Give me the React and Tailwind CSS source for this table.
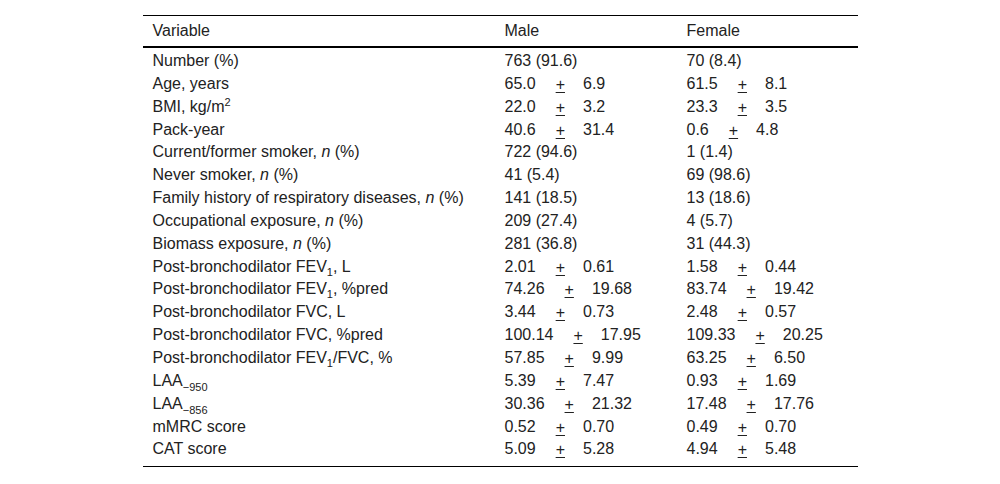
import React from "react";

const MS = ({ m, sd }) => (
  <span className="whitespace-nowrap">
    <span>{m}</span>
    <span className="relative top-[1px] ml-[20px] underline decoration-1 underline-offset-[2px]">+</span>
    <span className="ml-[18px]">{sd}</span>
  </span>
);

const N = () => <i>n</i>;
const S1 = () => <sub className="text-[11px] bottom-[-4px]">1</sub>;

const rows = [
  [<>Number (%)</>, "763 (91.6)", "70 (8.4)"],
  [<>Age, years</>, <MS m="65.0" sd="6.9" />, <MS m="61.5" sd="8.1" />],
  [<>BMI, kg/m<sup className="text-[11px] top-[-6px]">2</sup></>, <MS m="22.0" sd="3.2" />, <MS m="23.3" sd="3.5" />],
  [<>Pack-year</>, <MS m="40.6" sd="31.4" />, <MS m="0.6" sd="4.8" />],
  [<>Current/former smoker, <N /> (%)</>, "722 (94.6)", "1 (1.4)"],
  [<>Never smoker, <N /> (%)</>, "41 (5.4)", "69 (98.6)"],
  [<>Family history of respiratory diseases, <N /> (%)</>, "141 (18.5)", "13 (18.6)"],
  [<>Occupational exposure, <N /> (%)</>, "209 (27.4)", "4 (5.7)"],
  [<>Biomass exposure, <N /> (%)</>, "281 (36.8)", "31 (44.3)"],
  [<>Post-bronchodilator FEV<S1 />, L</>, <MS m="2.01" sd="0.61" />, <MS m="1.58" sd="0.44" />],
  [<>Post-bronchodilator FEV<S1 />, %pred</>, <MS m="74.26" sd="19.68" />, <MS m="83.74" sd="19.42" />],
  [<>Post-bronchodilator FVC, L</>, <MS m="3.44" sd="0.73" />, <MS m="2.48" sd="0.57" />],
  [<>Post-bronchodilator FVC, %pred</>, <MS m="100.14" sd="17.95" />, <MS m="109.33" sd="20.25" />],
  [<>Post-bronchodilator FEV<S1 />/FVC, %</>, <MS m="57.85" sd="9.99" />, <MS m="63.25" sd="6.50" />],
  [<>LAA<sub className="text-[11px] bottom-[-5px]">−950</sub></>, <MS m="5.39" sd="7.47" />, <MS m="0.93" sd="1.69" />],
  [<>LAA<sub className="text-[11px] bottom-[-5px]">−856</sub></>, <MS m="30.36" sd="21.32" />, <MS m="17.48" sd="17.76" />],
  [<>mMRC score</>, <MS m="0.52" sd="0.70" />, <MS m="0.49" sd="0.70" />],
  [<>CAT score</>, <MS m="5.09" sd="5.28" />, <MS m="4.94" sd="5.48" />],
];

export default function App() {
  return (
    <div
      className="w-[1000px] h-[484px] bg-white pt-[15px] text-[16px] text-[#222]"
      style={{ fontFamily: '"Liberation Sans", Arial, sans-serif' }}
    >
      <div className="w-[715px] mx-auto border-t border-black">
        <div className="grid grid-cols-[352px_182px_181px] h-[32px] items-center border-b-2 border-black leading-[22px]">
          <div className="pl-[10px]">Variable</div>
          <div className="pl-[10px]">Male</div>
          <div className="pl-[10px]">Female</div>
        </div>
        <div className="pt-[2px] pb-[5px] border-b border-black">
          {rows.map((r, i) => (
            <div
              key={i}
              className="grid grid-cols-[352px_182px_181px] h-[22.85px] items-center leading-[22.85px]"
            >
              <div className="pl-[10px] whitespace-nowrap">{r[0]}</div>
              <div className="pl-[10px] whitespace-nowrap">{r[1]}</div>
              <div className="pl-[10px] whitespace-nowrap">{r[2]}</div>
            </div>
          ))}
        </div>
      </div>
    </div>
  );
}
